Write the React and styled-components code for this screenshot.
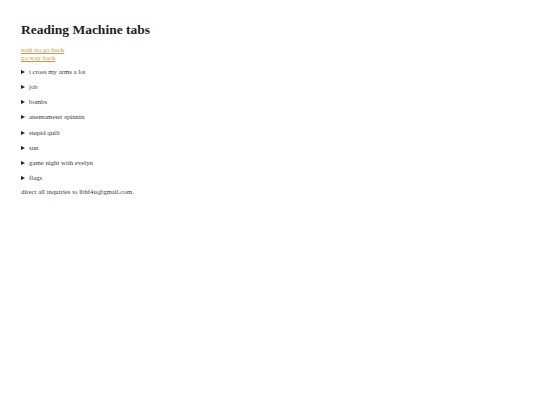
import React from "react";
import styled, { createGlobalStyle } from "styled-components";

const Global = createGlobalStyle`
  html, body { margin: 0; padding: 0; background: #fff; }
  body { font-family: "Liberation Serif", "Times New Roman", serif; color: #3a3a3a; }
`;

const Page = styled.main`
  padding: 21px 21px;
  font-size: 6.8px;
  line-height: 8px;
`;

const Title = styled.h1`
  margin: 0 0 7px;
  font-size: 13.5px;
  line-height: 18px;
  font-weight: bold;
  color: #222;
`;

const Nav = styled.nav`
  display: flex;
  flex-direction: column;
  margin-bottom: 6px;
`;

const NavLink = styled.a`
  color: #dc9248;
  text-decoration: underline;
`;

const Tabs = styled.div`
  display: flex;
  flex-direction: column;
  gap: 7.15px;
  margin-bottom: 6px;
`;

const Details = styled.details`
  margin: 0;
`;

const Summary = styled.summary`
  cursor: pointer;
  list-style: none;
  display: flex;
  align-items: center;
  gap: 4px;
  &::-webkit-details-marker { display: none; }
`;

const Arrow = styled.span`
  display: inline-block;
  width: 0;
  height: 0;
  border-top: 2.5px solid transparent;
  border-bottom: 2.5px solid transparent;
  border-left: 4px solid #222;
`;

const Footer = styled.p`
  margin: 0;
`;

const tabs = [
  "i cross my arms a lot",
  "job",
  "bombs",
  "anemometer spinnin",
  "stupid quilt",
  "sun",
  "game night with evelyn",
  "flags",
];

export default function App() {
  return (
    <>
      <Global />
      <Page>
        <Title>Reading Machine tabs</Title>
        <Nav>
          <NavLink href="#">wait no go back</NavLink>
          <NavLink href="#">go way back</NavLink>
        </Nav>
        <Tabs>
          {tabs.map((t) => (
            <Details key={t}>
              <Summary>
                <Arrow />
                {t}
              </Summary>
            </Details>
          ))}
        </Tabs>
        <Footer>direct all inquiries to lbhf4u@gmail.com.</Footer>
      </Page>
    </>
  );
}
